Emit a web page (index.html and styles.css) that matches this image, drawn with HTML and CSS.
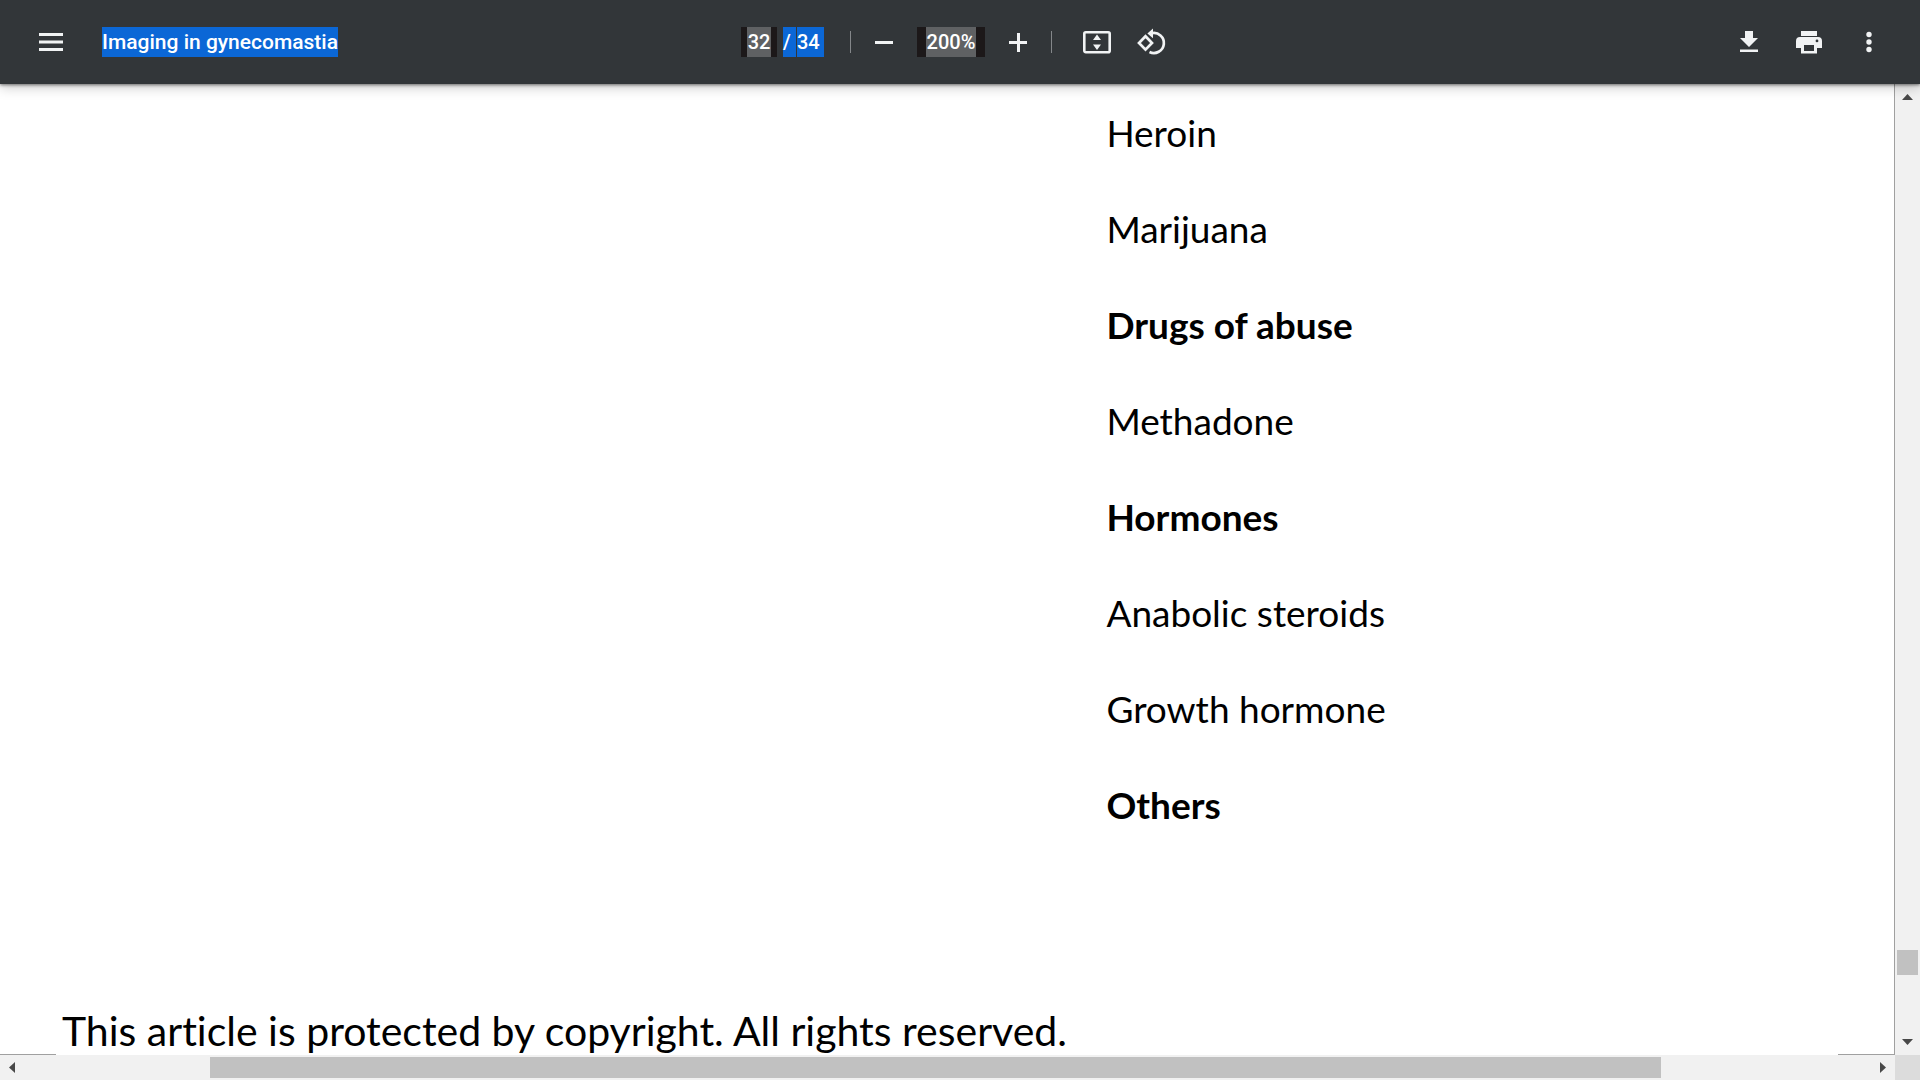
FILE: index.html
```html
<!DOCTYPE html>
<html lang="en">
<head>
<meta charset="utf-8">
<title>Imaging in gynecomastia</title>
<link rel="stylesheet" href="styles.css">
</head>
<body>
<header class="toolbar">
  <div class="start">
    <button class="icon" aria-label="Menu"><svg viewBox="0 0 32 32"><path d="M4 7h24v3H4zM4 14.500h24v3H4zM4 22h24v3H4z"/></svg></button>
    <h1 class="title"><span class="selected">Imaging in gynecomastia</span></h1>
  </div>
  <div class="center">
    <div class="pages">
      <input class="field page-field" type="text" value="32" aria-label="Page number">
      <span class="count"><span class="selected slash">/</span><span class="selected total">34</span></span>
    </div>
    <span class="divider"></span>
    <button class="icon" aria-label="Zoom out"><svg viewBox="0 0 32 32"><path d="M7 15h18v3H7z"/></svg></button>
    <input class="field zoom-field" type="text" value="200%" aria-label="Zoom level">
    <button class="icon" aria-label="Zoom in"><svg viewBox="0 0 32 32"><path d="M7 15h8V7h3v8h7v3h-7v8h-3v-8H7z"/></svg></button>
    <span class="divider"></span>
    <div class="view-tools">
      <button class="icon" aria-label="Fit to page"><svg viewBox="0 0 32 32"><rect x="3.3" y="6.3" width="25.4" height="20" rx="1.500" fill="none" stroke="currentColor" stroke-width="2.6"/><path d="M16 8.500l4 5.500h-8zM16 24l4-5.500h-8z"/></svg></button>
      <button class="icon" aria-label="Rotate counterclockwise"><svg viewBox="0 0 32 32"><path d="M10.500 10.300L17 17l-6.500 6.600L4 17z" fill="none" stroke="currentColor" stroke-width="2.700"/><path d="M16.500 7.300a10 10 0 1 1-2 18.700" fill="none" stroke="currentColor" stroke-width="2.700"/><path d="M18 2.500v9.800l-5.600-4.900z"/></svg></button>
    </div>
  </div>
  <div class="end">
    <button class="icon" aria-label="Download"><svg viewBox="0 0 32 32"><path d="M12 5h8v7h5l-9 9-9-9h5zM7 23.500h18V26H7z"/></svg></button>
    <button class="icon" aria-label="Print"><svg viewBox="0 0 32 32"><path fill-rule="evenodd" d="M8 5h16v5H8zM7 11h18a4 4 0 0 1 4 4v7h-5v5.500H8V22H3v-7a4 4 0 0 1 4-4zm4 8v6h10v-6zm13-5.500a1.400 1.400 0 1 0 0 2.800 1.400 1.400 0 0 0 0-2.800z"/></svg></button>
    <button class="icon" aria-label="More actions"><svg viewBox="0 0 32 32"><circle cx="16" cy="8.500" r="2.700"/><circle cx="16" cy="16" r="2.700"/><circle cx="16" cy="23.500" r="2.700"/></svg></button>
  </div>
</header>
<div class="viewer">
  <main class="sheet">
    <div class="columns">
      <div class="entries">
        <p>Heroin</p>
        <p>Marijuana</p>
        <p><strong>Drugs of abuse</strong></p>
        <p>Methadone</p>
        <p><strong>Hormones</strong></p>
        <p>Anabolic steroids</p>
        <p>Growth hormone</p>
        <p><strong>Others</strong></p>
      </div>
    </div>
    <p class="notice">This article is protected by copyright. All rights reserved.</p>
    <div class="edges"><span></span><span></span></div>
  </main>
  <div class="bar vertical">
    <button class="arrow" aria-label="Scroll up"><svg viewBox="0 0 25 25"><path d="M7 16h11l-5.500-6z"/></svg></button>
    <div class="track"><span class="before"></span><span class="thumb"></span><span class="after"></span></div>
    <button class="arrow" aria-label="Scroll down"><svg viewBox="0 0 25 25"><path d="M7 9h11l-5.500 6z"/></svg></button>
  </div>
  <div class="bar horizontal">
    <button class="arrow" aria-label="Scroll left"><svg viewBox="0 0 25 25"><path d="M15 7v11l-6-5.500z"/></svg></button>
    <div class="track"><span class="before"></span><span class="thumb"></span><span class="after"></span></div>
    <button class="arrow" aria-label="Scroll right"><svg viewBox="0 0 25 25"><path d="M10 7v11l6-5.500z"/></svg></button>
  </div>
  <div class="corner"></div>
</div>
</body>
</html>
```
FILE: styles.css
```css
* { box-sizing: border-box; }

body {
  margin: 0;
  height: 100vh;
  display: flex;
  flex-direction: column;
  overflow: hidden;
  background: #fff;
  color: #000;
  font-family: Lato, sans-serif;
}

p, h1 { margin: 0; }
button { padding: 0; border: 0; background: none; color: inherit; }
svg { display: block; width: 100%; height: 100%; fill: currentColor; }

.toolbar {
  position: relative;
  z-index: 1;
  flex: none;
  display: grid;
  grid-template-columns: 1fr auto 1fr;
  align-items: center;
  height: 84px;
  padding: 0 35px;
  background: #323639;
  color: #f1f3f4;
  box-shadow: 0 1px 3px rgba(0, 0, 0, .5), 0 3px 12px rgba(0, 0, 0, .22);
  font-family: Roboto, sans-serif;
  font-size: 20px;
  font-weight: 500;
}

.start, .center, .end, .pages, .view-tools, .count { display: flex; align-items: center; }
.start { gap: 35px; }
.center { gap: 17px; padding-right: 12px; }
.end { gap: 28px; justify-content: flex-end; }
.pages { gap: 6px; margin-right: 9px; }
.view-tools { gap: 22px; margin-left: 12px; }
.icon { width: 32px; height: 32px; }

.title { font-size: 21px; font-weight: 500; }
.selected { display: block; height: 30px; line-height: 30px; background: #0b67d6; color: #fff; }
.count { gap: 1px; }
.slash { width: 13px; }
.total { width: 27px; }

.field {
  height: 30px;
  border: 0;
  border-radius: 0;
  color: #fff;
  font: inherit;
  text-align: center;
  background: linear-gradient(#5f6163, #5f6163) content-box, #1c1819;
}
.page-field { width: 36px; padding: 0 6px; }
.zoom-field { width: 68px; padding: 0 9px; }
.divider { width: 1px; height: 22px; background: #84878a; }

.viewer {
  flex: 1;
  min-height: 0;
  display: grid;
  grid-template-columns: minmax(0, 1fr) 25px;
  grid-template-rows: minmax(0, 1fr) 25px;
}

.sheet {
  position: relative;
  display: flex;
  flex-direction: column;
  justify-content: space-between;
  overflow: hidden;
  border-right: 1px solid #a0a0a0;
  font-variant-ligatures: none;
}
.columns { display: grid; grid-template-columns: 1107fr 788fr; padding-top: 1px; }
.entries { grid-column: 2; font-size: 37px; line-height: 96px; white-space: nowrap; }
.notice { padding-left: 62px; font-size: 41px; line-height: 48px; white-space: nowrap; }

.edges {
  position: absolute;
  inset: auto 0 0;
  display: flex;
  justify-content: space-between;
}
.edges span { width: 56px; height: 1px; background: #a0a0a0; }

.bar { display: flex; background: #f1f1f1; color: #484848; }
.vertical { flex-direction: column; }
.arrow { flex: none; width: 25px; height: 25px; }
.track { flex: 1; display: flex; }
.vertical .track { flex-direction: column; padding: 0 2px; }
.horizontal .track { padding: 2px 0; }
.thumb { background: #c1c1c1; }
.vertical .before { flex: 841; }
.vertical .thumb { height: 25px; }
.vertical .after { flex: 55; }
.horizontal .before { flex: 185; }
.horizontal .thumb { flex: 1451; }
.horizontal .after { flex: 209; }
.corner { background: #dcdcdc; }
```
